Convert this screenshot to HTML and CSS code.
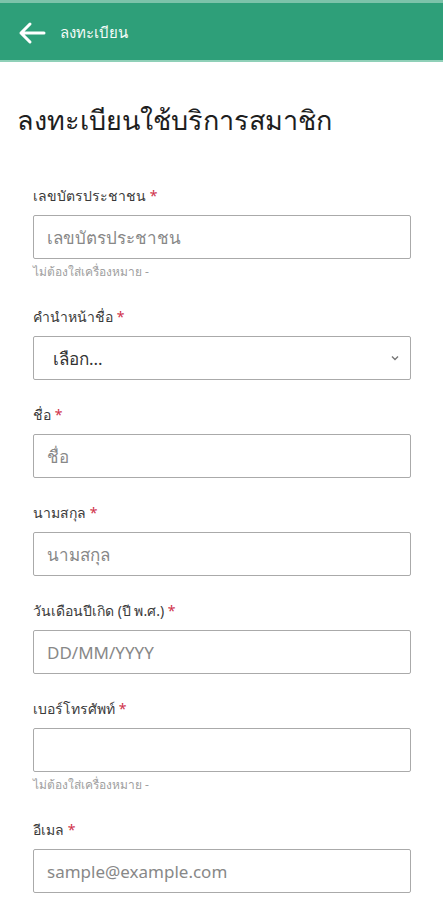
FILE: index.html
```html
<!DOCTYPE html>
<html lang="th">
<head>
  <meta charset="UTF-8">
  <meta name="viewport" content="width=device-width, initial-scale=1.0">
  <title>ลงทะเบียน</title>
  <link rel="stylesheet" href="styles.css">
</head>
<body>
  <header class="topbar">
    <button class="back-btn" aria-label="กลับ">
      <svg width="28" height="24" viewBox="0 0 28 24" fill="none" stroke="#fff" stroke-width="3" stroke-linecap="round" stroke-linejoin="round">
        <path d="M26 12H3M12 3L3 12l9 9"/>
      </svg>
    </button>
    <span class="topbar-title">ลงทะเบียน</span>
  </header>

  <main class="page">
    <h1 class="page-title">ลงทะเบียนใช้บริการสมาชิก</h1>

    <form class="form">
      <div class="field">
        <label for="idcard">เลขบัตรประชาชน <span class="req">*</span></label>
        <input type="text" id="idcard" placeholder="เลขบัตรประชาชน">
        <small class="hint">ไม่ต้องใส่เครื่องหมาย -</small>
      </div>

      <div class="field">
        <label for="prefix">คำนำหน้าชื่อ <span class="req">*</span></label>
        <div class="select-wrap">
          <select id="prefix">
            <option>เลือก...</option>
            <option>นาย</option>
            <option>นาง</option>
            <option>นางสาว</option>
          </select>
          <svg class="chevron" width="8" height="6" viewBox="0 0 8 6" fill="none" stroke="#777" stroke-width="1.4">
            <path d="M1 1.5l3 3 3-3"/>
          </svg>
        </div>
      </div>

      <div class="field">
        <label for="fname">ชื่อ <span class="req">*</span></label>
        <input type="text" id="fname" placeholder="ชื่อ">
      </div>

      <div class="field">
        <label for="lname">นามสกุล <span class="req">*</span></label>
        <input type="text" id="lname" placeholder="นามสกุล">
      </div>

      <div class="field">
        <label for="birth">วันเดือนปีเกิด (ปี พ.ศ.) <span class="req">*</span></label>
        <input type="text" id="birth" placeholder="DD/MM/YYYY">
      </div>

      <div class="field">
        <label for="phone">เบอร์โทรศัพท์ <span class="req">*</span></label>
        <input type="tel" id="phone">
        <small class="hint">ไม่ต้องใส่เครื่องหมาย -</small>
      </div>

      <div class="field">
        <label for="email">อีเมล <span class="req">*</span></label>
        <input type="email" id="email" placeholder="sample@example.com">
      </div>
    </form>
  </main>
</body>
</html>
```

FILE: styles.css
```css
* {
  box-sizing: border-box;
}

body {
  margin: 0;
  background: #fff;
  color: #222;
  font-family: "Noto Sans", sans-serif;
}

.topbar {
  height: 62px;
  display: flex;
  align-items: center;
  gap: 14px;
  padding: 2px 16px 0 18px;
  background: #2e9f79;
  border-top: 3px solid #7cc3aa;
  border-bottom: 2px solid #8fd0b8;
}

.back-btn {
  display: flex;
  padding: 0;
  background: none;
  border: none;
}

.topbar-title {
  color: #f4fbf8;
  font-size: 15px;
  font-weight: 400;
}

.page {
  padding: 37px 32px 0 33px;
}

.page-title {
  margin: 0 0 43px -16px;
  font-size: 27px;
  font-weight: 400;
  color: #1e1e1e;
}

.form {
  display: flex;
  flex-direction: column;
  gap: 24px;
}

.field {
  display: flex;
  flex-direction: column;
}

.field label {
  font-size: 14px;
  font-weight: 400;
  color: #3a3a3a;
  margin-bottom: 8px;
}

.req {
  color: #d0324a;
}

.field input,
.field select {
  width: 100%;
  height: 44px;
  padding: 0 13px;
  border: 1px solid #aaa;
  border-radius: 2px;
  background: #fff;
  font-family: inherit;
  font-size: 17px;
  color: #333;
  outline: none;
}

.field input::placeholder {
  color: #888;
}

.select-wrap {
  position: relative;
}

.field select {
  appearance: none;
  padding-left: 19px;
}

.chevron {
  position: absolute;
  right: 12px;
  top: 19px;
}

.hint {
  margin-top: 3px;
  margin-bottom: 1px;
  font-size: 12px;
  color: #a0a0a0;
}
```
